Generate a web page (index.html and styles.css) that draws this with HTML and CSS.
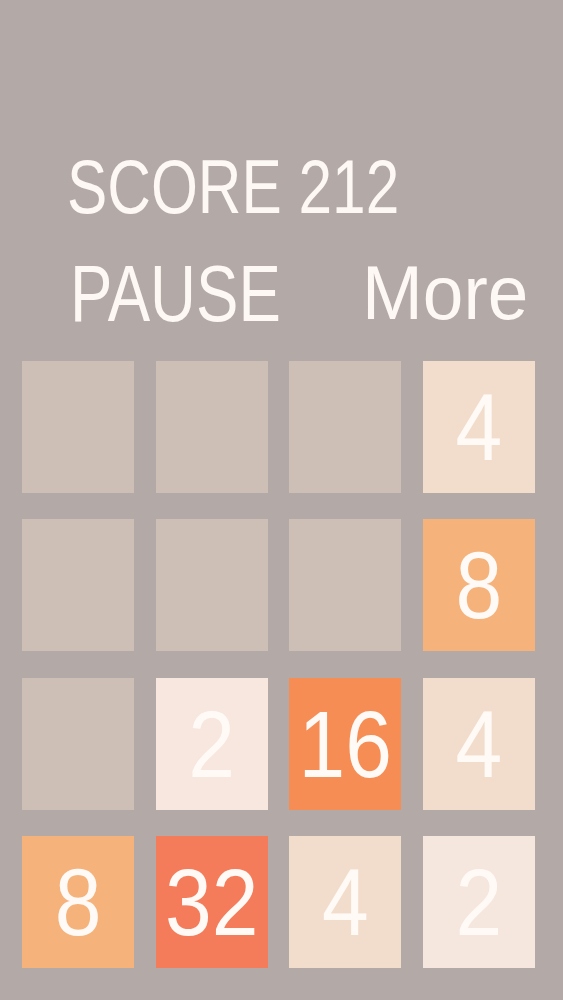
FILE: index.html
```html
<!DOCTYPE html>
<html>
<head>
<meta charset="utf-8">
<title>2048</title>
<link rel="stylesheet" href="styles.css">
</head>
<body>
<div class="header">
  <div class="score"><span class="stretch">SCORE 212</span></div>
  <div class="controls">
    <div class="pause"><span class="stretch">PAUSE</span></div>
    <div class="more"><span class="stretch">More</span></div>
  </div>
</div>
<div class="board">
  <div class="tile empty"></div>
  <div class="tile empty"></div>
  <div class="tile empty"></div>
  <div class="tile t4"><span>4</span></div>

  <div class="tile empty"></div>
  <div class="tile empty"></div>
  <div class="tile empty"></div>
  <div class="tile t8"><span>8</span></div>

  <div class="tile empty"></div>
  <div class="tile t2"><span>2</span></div>
  <div class="tile t16"><span>16</span></div>
  <div class="tile t4"><span>4</span></div>

  <div class="tile t8"><span>8</span></div>
  <div class="tile t32"><span>32</span></div>
  <div class="tile t4"><span>4</span></div>
  <div class="tile t2b"><span>2</span></div>
</div>
</body>
</html>
```

FILE: styles.css
```css
html, body {
  margin: 0;
  padding: 0;
  background: #b3a9a6;
}
body {
  width: 563px;
  height: 1000px;
  overflow: hidden;
  font-family: "Liberation Sans", Arial, sans-serif;
  color: #fdf8f3;
}
.header {
  padding-top: 157px;
}
.stretch {
  display: inline-block;
  white-space: nowrap;
}
.score {
  padding-left: 67px;
  font-size: 60.4px;
  line-height: 60px;
  height: 60px;
}
.score .stretch {
  transform: scaleY(1.25);
}
.controls {
  margin-top: 44px;
  display: flex;
  align-items: flex-start;
  height: 63px;
}
.pause {
  margin-left: 70px;
  font-size: 63.6px;
  line-height: 63px;
  height: 63px;
}
.pause .stretch {
  transform: scaleY(1.25);
}
.more {
  margin-left: auto;
  width: 201px;
  font-size: 73px;
  line-height: 63px;
  height: 63px;
}
.more .stretch {
  transform: scaleY(1.05);
}
.board {
  margin-top: 37px;
  padding-left: 22px;
  display: grid;
  grid-template-columns: repeat(4, 112px);
  grid-auto-rows: 132px;
  column-gap: 21.67px;
  row-gap: 26.33px;
}
.tile {
  display: flex;
  align-items: center;
  justify-content: center;
  font-size: 84px;
  line-height: 84px;
  color: #fffaf6;
}
.tile span {
  display: inline-block;
  transform: scaleY(1.13);
}
.empty { background: #cdbfb6; }
.t2 { background: #f7e7de; }
.t2b { background: #f5e6de; }
.t4 { background: #f2ddcd; }
.t8 { background: #f5b27b; }
.t16 { background: #f68d55; }
.t32 { background: #f47c5b; }
```
